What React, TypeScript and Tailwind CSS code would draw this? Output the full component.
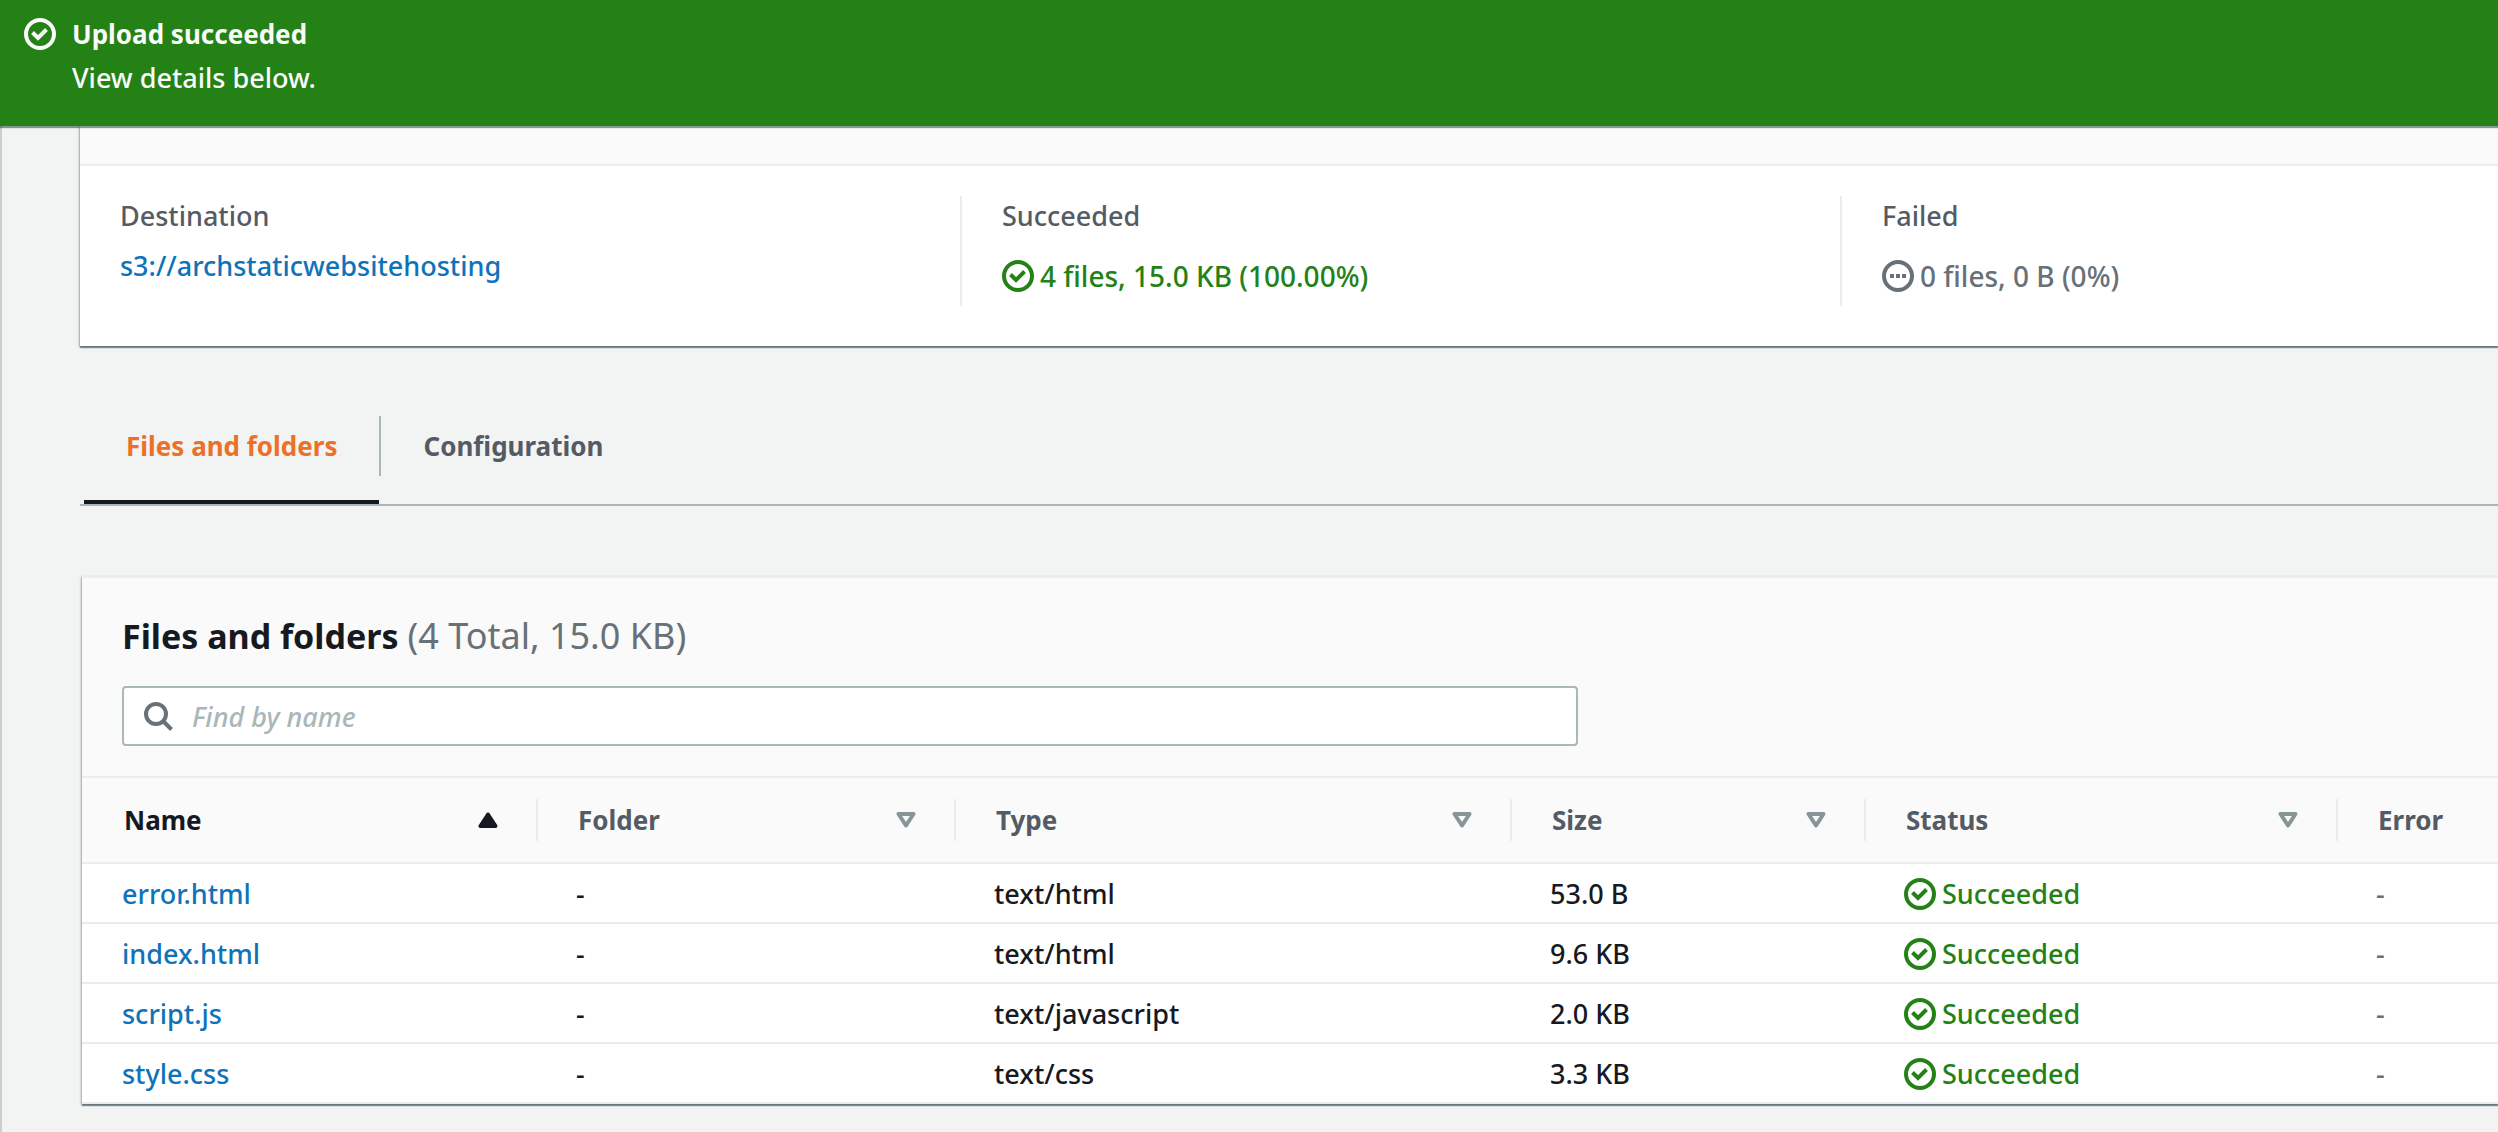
import type { ReactNode } from "react";

const files = [
  { name: "error.html", folder: "-", type: "text/html", size: "53.0 B", error: "-" },
  { name: "index.html", folder: "-", type: "text/html", size: "9.6 KB", error: "-" },
  { name: "script.js", folder: "-", type: "text/javascript", size: "2.0 KB", error: "-" },
  { name: "style.css", folder: "-", type: "text/css", size: "3.3 KB", error: "-" },
];

const cardShadow =
  "shadow-[0_2px_1px_0_rgba(0,28,36,0.4),2px_1px_2px_0_rgba(0,28,36,0.15),-1px_1px_2px_0_rgba(0,28,36,0.3)]";

function CheckIcon() {
  return (
    <svg className="size-8 shrink-0" viewBox="0 0 32 32" fill="none" stroke="currentColor" strokeWidth="4" aria-hidden="true">
      <circle cx="16" cy="16" r="14" />
      <path d="M8.5 14.5 14 20l8.5-8.5" />
    </svg>
  );
}

function PendingIcon() {
  return (
    <svg className="size-8 shrink-0" viewBox="0 0 32 32" aria-hidden="true">
      <circle cx="16" cy="16" r="14" fill="none" stroke="currentColor" strokeWidth="4" />
      <path d="M8 14h4v4H8zM14 14h4v4h-4zM20 14h4v4h-4z" fill="currentColor" />
    </svg>
  );
}

function SearchIcon() {
  return (
    <svg className="size-8 shrink-0 text-[#687078]" viewBox="0 0 32 32" fill="none" stroke="currentColor" strokeWidth="4" aria-hidden="true">
      <circle cx="14" cy="14" r="10" />
      <path d="m21 21 8.500 8.500" />
    </svg>
  );
}

function SortAscending() {
  return (
    <svg className="h-4 w-5 shrink-0" viewBox="0 0 20 16" fill="currentColor" stroke="currentColor" strokeWidth="4" strokeLinejoin="round" aria-hidden="true">
      <path d="M10 2.500 2.500 14h15z" />
    </svg>
  );
}

function SortNone() {
  return (
    <svg className="h-4 w-5 shrink-0 text-[#879596]" viewBox="0 0 20 16" fill="none" stroke="currentColor" strokeWidth="4" strokeLinejoin="round" aria-hidden="true">
      <path d="M10 13.500 2.500 2h15z" />
    </svg>
  );
}

function HeaderCell({ label, sort = "none" }: { label: string; sort?: "none" | "ascending" | "off" }) {
  return (
    <th
      scope="col"
      aria-sort={sort === "ascending" ? "ascending" : undefined}
      className="h-[88px] border-y-2 border-[#eaeded] bg-[#fafafa] p-0 text-left first:pl-0.5"
    >
      <button
        type="button"
        className={
          "flex h-[42px] w-full items-center justify-between pr-[38px] pl-10 text-[26px] font-bold " +
          (sort === "ascending" ? "text-[#16191f] " : "text-[#545b64] ") +
          (sort === "off" ? "" : "border-r-2 border-[#eaeded]")
        }
      >
        {label}
        {sort === "ascending" && <SortAscending />}
        {sort === "none" && <SortNone />}
      </button>
    </th>
  );
}

function Cell({ children }: { children: ReactNode }) {
  return (
    <td className="h-[60px] border-b-2 border-[#eaeded] pt-0.5 pr-0 pb-0 pl-[38px] first:pl-10">{children}</td>
  );
}

export default function App() {
  return (
    <div className="flex min-h-screen flex-col overflow-x-hidden bg-[#f2f3f3] font-['Noto_Sans','Open_Sans',sans-serif] text-[27px] leading-10 font-medium text-[#16191f]">
      <header
        role="status"
        className="relative flex gap-4 bg-[#238116] pt-3 pb-[26px] pl-6 leading-[44px] text-[#fafafa] shadow-[0_2px_1px_0_rgba(0,28,36,0.45)]"
      >
        <div className="pt-1.5">
          <CheckIcon />
        </div>
        <div>
          <h1 className="text-[26px] font-bold">Upload succeeded</h1>
          <p>View details below.</p>
        </div>
      </header>

      <main className="flex-1 border-l-2 border-[#c9cfd1] pl-[78px]">
        <section aria-label="Summary" className={"bg-white " + cardShadow}>
          <div className="h-10 border-b-2 border-[#eaeded] bg-[#fafafa]" />
          <dl className="grid grid-cols-[882px_880px_1fr] pt-[30px] pb-10">
            <div className="h-[110px] border-r-2 border-[#eaeded] pl-10">
              <dt className="text-[#545b64]">Destination</dt>
              <dd className="mt-2.5">
                <a href="#destination" className="text-[#0f73b9]">
                  s3://archstaticwebsitehosting
                </a>
              </dd>
            </div>
            <div className="h-[110px] border-r-2 border-[#eaeded] pl-10">
              <dt className="text-[#545b64]">Succeeded</dt>
              <dd className="mt-5 flex items-center gap-1.5 text-[28px] text-[#238116]">
                <CheckIcon />
                4 files, 15.0 KB (100.00%)
              </dd>
            </div>
            <div className="h-[110px] pl-10">
              <dt className="text-[#545b64]">Failed</dt>
              <dd className="mt-5 flex items-center gap-1.5 text-[28px] text-[#687078]">
                <PendingIcon />
                0 files, 0 B (0%)
              </dd>
            </div>
          </dl>
        </section>

        <div role="tablist" className="mt-[70px] flex border-b-2 border-[#aab7b8] pl-1 text-[26px] font-bold">
          <button type="button" role="tab" aria-selected="true" className="border-b-4 border-[#16191f] px-[42px] pb-6 leading-[60px] text-[#eb7128]">
            Files and folders
          </button>
          <span className="h-[60px] w-0.5 bg-[#aab7b8]" />
          <button type="button" role="tab" aria-selected="false" className="px-[42px] pb-7 leading-[60px] text-[#545b64]">
            Configuration
          </button>
        </div>

        <section className={"mt-[70px] ml-0.5 border-t-2 border-[#eaeded] bg-white " + cardShadow}>
          <div className="bg-[#fafafa] px-10 pt-9 pb-[30px]">
            <h2 className="text-[34px] leading-[44px] font-bold">
              Files and folders <span className="text-[36px] font-normal text-[#687078]">(4 Total, 15.0 KB)</span>
            </h2>
            <label className="mt-7 flex h-[60px] w-full max-w-[1456px] items-center gap-[18px] rounded-sm border-2 border-[#aab7b8] bg-white px-[18px]">
              <SearchIcon />
              <input
                type="text"
                aria-label="Find by name"
                placeholder="Find by name"
                className="h-full min-w-0 flex-1 bg-transparent outline-none placeholder:text-[#aab7b8] placeholder:italic"
              />
            </label>
          </div>
          <table className="w-full table-fixed border-separate border-spacing-0">
            <colgroup>
              <col className="w-[456px]" />
              <col className="w-[418px]" />
              <col className="w-[556px]" />
              <col className="w-[354px]" />
              <col className="w-[472px]" />
              <col />
            </colgroup>
            <thead>
              <tr>
                <HeaderCell label="Name" sort="ascending" />
                <HeaderCell label="Folder" />
                <HeaderCell label="Type" />
                <HeaderCell label="Size" />
                <HeaderCell label="Status" />
                <HeaderCell label="Error" sort="off" />
              </tr>
            </thead>
            <tbody>
              {files.map((file) => (
                <tr key={file.name}>
                  <Cell>
                    <a href={"#" + file.name} className="text-[#0f73b9]">
                      {file.name}
                    </a>
                  </Cell>
                  <Cell>{file.folder}</Cell>
                  <Cell>{file.type}</Cell>
                  <Cell>{file.size}</Cell>
                  <Cell>
                    <span className="flex items-center gap-1.5 text-[#238116]">
                      <CheckIcon />
                      Succeeded
                    </span>
                  </Cell>
                  <Cell>
                    <span className="text-[#687078]">{file.error}</span>
                  </Cell>
                </tr>
              ))}
            </tbody>
          </table>
        </section>
      </main>
    </div>
  );
}
